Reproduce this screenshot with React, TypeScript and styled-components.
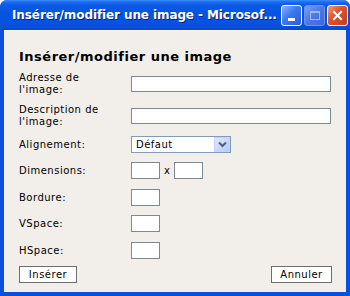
import styled, { createGlobalStyle } from "styled-components";

const Global = createGlobalStyle`
  html, body { margin: 0; padding: 0; background: #fff; }
  * { box-sizing: border-box; }
`;

const Window = styled.div`
  width: 350px;
  height: 296px;
  display: flex;
  flex-direction: column;
  background: #0a4fde;
  border-radius: 7px 7px 0 0;
  overflow: hidden;
`;

const TitleBar = styled.div`
  height: 30px;
  display: flex;
  align-items: center;
  padding: 0 5px 0 8px;
  gap: 4px;
  background: linear-gradient(
    to bottom,
    #3b8cf6 0px,
    #1e6cf0 2px,
    #0d5be6 5px,
    #0454e0 14px,
    #0553e0 22px,
    #0a4ed6 28px,
    #0742c4 30px
  );
`;

const Caption = styled.span`
  flex: 1;
  color: #fff;
  font: bold 12px "DejaVu Sans", Verdana, sans-serif;
  letter-spacing: -0.1px;
  white-space: nowrap;
  text-shadow: 1px 1px 0 #0a1e80;
`;

const CapButtons = styled.div`
  display: flex;
  gap: 2px;
`;

const CapButton = styled.div<{ $kind: "min" | "max" | "close" }>`
  width: 21px;
  height: 21px;
  border-radius: 3px;
  border: 1px solid ${({ $kind }) => ($kind === "max" ? "#6d93e8" : "#fff")};
  display: flex;
  align-items: center;
  justify-content: center;
  background: ${({ $kind }) =>
    $kind === "close"
      ? "linear-gradient(135deg, #f0a080 0%, #e05530 40%, #c83a18 100%)"
      : $kind === "max"
      ? "linear-gradient(135deg, #7aa0f0 0%, #4a78e8 50%, #3d68d8 100%)"
      : "linear-gradient(135deg, #8ab0ff 0%, #3a78f0 45%, #2a5cde 100%)"};
`;

const Client = styled.div`
  flex: 1;
  margin: 0 4px 4px 4px;
  background: #f2eeea;
  border-top: 1px solid #fbfaf8;
  padding: 18px 14px 0 15px;
  display: flex;
  flex-direction: column;
  font: 10px "DejaVu Sans", Verdana, sans-serif;
  color: #000;
`;

const Heading = styled.h1`
  margin: 0 0 7px 0;
  font: bold 13px "DejaVu Sans", Verdana, sans-serif;
  letter-spacing: 0.5px;
  line-height: 16px;
`;

const Form = styled.div`
  display: flex;
  flex-direction: column;
`;

const Row = styled.div<{ $h: number; $mt: number }>`
  display: grid;
  grid-template-columns: 112px 1fr;
  align-items: center;
  height: ${({ $h }) => $h}px;
  margin-top: ${({ $mt }) => $mt}px;
`;

const Label = styled.label`
  line-height: 12px;
  letter-spacing: 0.5px;
`;

const Controls = styled.div`
  display: flex;
  align-items: center;
  gap: 4px;
`;

const TextBox = styled.div<{ $w: number; $h?: number }>`
  width: ${({ $w }) => $w}px;
  height: ${({ $h }) => $h ?? 17}px;
  background: #fff;
  border: 1px solid #7d8a92;
`;

const Select = styled.div`
  width: 100px;
  height: 17px;
  background: #fff;
  border: 1px solid #7f9db9;
  display: flex;
  align-items: center;
  justify-content: space-between;
  padding-left: 4px;
  letter-spacing: 0.5px;
`;

const DropBtn = styled.div`
  width: 16px;
  height: 15px;
  background: linear-gradient(135deg, #dde8fe 0%, #b7cbf6 100%);
  border: 1px solid #c3d3fd;
  display: flex;
  align-items: center;
  justify-content: center;
`;

const Times = styled.span`
  font-size: 10px;
`;

const Footer = styled.div`
  display: flex;
  justify-content: space-between;
  margin-top: 7px;
`;

const Button = styled.button<{ $w: number }>`
  width: ${({ $w }) => $w}px;
  height: 17px;
  padding: 0;
  background: #fff;
  border: 1px solid #6e6e6e;
  font: 10px "DejaVu Sans", Verdana, sans-serif;
  letter-spacing: 0.5px;
  color: #000;
`;

const IeIcon = () => (
  <svg width="16" height="16" viewBox="0 0 16 16">
    <path d="M3 1h7l3 3v11H3z" fill="#fff" stroke="#8a8a8a" strokeWidth="1" />
    <path d="M10 1v3h3" fill="#ddd" stroke="#8a8a8a" strokeWidth="1" />
    <path
      d="M11.5 10.5H6.2c.2 1.4 1.2 2.2 2.4 2.2.9 0 1.6-.4 2-1h1.5c-.6 1.5-2 2.3-3.5 2.3-2.2 0-3.8-1.6-3.8-3.8S6.4 6.4 8.6 6.4c2 0 3.2 1.6 2.9 4.1zM6.3 9.3h3.8c-.1-1-.8-1.7-1.9-1.7s-1.8.7-1.9 1.7z"
      fill="#1f6fd8"
    />
    <path d="M2.5 12.5c1-3 4.5-6.5 9.5-7.5" stroke="#e9a92a" strokeWidth="1" fill="none" />
  </svg>
);

export default function App() {
  return (
    <>
      <Global />
      <Window>
        <TitleBar>
          <IeIcon />
          <Caption>Insérer/modifier une image - Microsof...</Caption>
          <CapButtons>
            <CapButton $kind="min">
              <svg width="13" height="13" viewBox="0 0 13 13">
                <rect x="3" y="9" width="7" height="3" fill="#fff" />
              </svg>
            </CapButton>
            <CapButton $kind="max">
              <svg width="13" height="13" viewBox="0 0 13 13">
                <rect x="2.5" y="2.5" width="9" height="8" fill="none" stroke="#9db7f0" strokeWidth="1" />
                <rect x="2" y="2" width="10" height="2" fill="#9db7f0" />
              </svg>
            </CapButton>
            <CapButton $kind="close">
              <svg width="13" height="13" viewBox="0 0 13 13">
                <path d="M3 3l7 7M10 3l-7 7" stroke="#fff" strokeWidth="2" strokeLinecap="square" />
              </svg>
            </CapButton>
          </CapButtons>
        </TitleBar>
        <Client>
          <Heading>Insérer/modifier une image</Heading>
          <Form>
            <Row $h={24} $mt={0}>
              <Label>
                Adresse de
                <br />
                l'image:
              </Label>
              <TextBox $w={200} $h={16} />
            </Row>
            <Row $h={24} $mt={8}>
              <Label>
                Description de
                <br />
                l'image:
              </Label>
              <TextBox $w={200} $h={16} />
            </Row>
            <Row $h={17} $mt={8}>
              <Label>Alignement:</Label>
              <Controls>
                <Select>
                  Défaut
                  <DropBtn>
                    <svg width="9" height="7" viewBox="0 0 9 7">
                      <path d="M1 1.5l3.5 3.5L8 1.5" stroke="#4d6185" strokeWidth="2" fill="none" />
                    </svg>
                  </DropBtn>
                </Select>
              </Controls>
            </Row>
            <Row $h={17} $mt={9}>
              <Label>Dimensions:</Label>
              <Controls>
                <TextBox $w={29} />
                <Times>x</Times>
                <TextBox $w={29} />
              </Controls>
            </Row>
            <Row $h={17} $mt={10}>
              <Label>Bordure:</Label>
              <Controls>
                <TextBox $w={29} />
              </Controls>
            </Row>
            <Row $h={17} $mt={9}>
              <Label>VSpace:</Label>
              <Controls>
                <TextBox $w={29} />
              </Controls>
            </Row>
            <Row $h={17} $mt={10}>
              <Label>HSpace:</Label>
              <Controls>
                <TextBox $w={29} />
              </Controls>
            </Row>
          </Form>
          <Footer>
            <Button $w={58}>Insérer</Button>
            <Button $w={61}>Annuler</Button>
          </Footer>
        </Client>
      </Window>
    </>
  );
}
